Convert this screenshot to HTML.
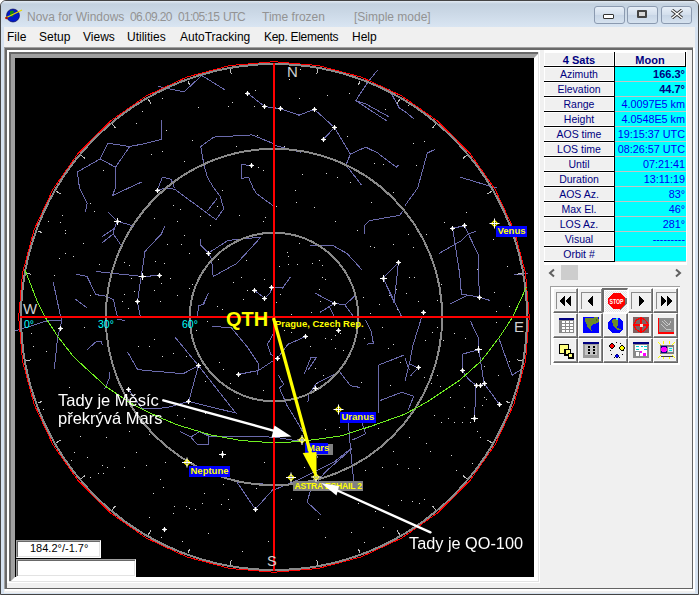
<!DOCTYPE html>
<html><head><meta charset="utf-8">
<style>
*{margin:0;padding:0;box-sizing:border-box}
html,body{width:699px;height:595px;overflow:hidden;background:#fff;font-family:"Liberation Sans",sans-serif}
.a{position:absolute}
.t{position:absolute;white-space:nowrap;line-height:1}
#win{left:0;top:0;width:699px;height:595px;background:#d6e2f0;border:1px solid #444;border-radius:6px 6px 0 0}
#title{left:1px;top:1px;width:697px;height:26px;background:linear-gradient(#e2eaf3 0px,#c3d1df 3px,#cddae8 14px,#d9e5f2 26px);border-radius:5px 5px 0 0}
.ttxt{color:#939393;font-size:12px;top:11px}
.tb{top:6px;width:31px;height:18px;border:1px solid #8b9ab0;border-radius:3px;background:linear-gradient(#e6eef7,#d2deec 50%,#c7d5e6 51%,#d6e2ef)}
#menu{left:4px;top:27px;width:691px;height:20px;background:#f0f0f0}
.mtxt{color:#000;font-size:12px;top:31px}
#client{left:4px;top:47px;width:691px;height:546px;background:#f0f0f0}
.gc{position:absolute;background:#f0f0f0;border:1px solid #fff}
.bl{position:absolute;background:#000}
.lab{position:absolute;white-space:nowrap;line-height:1;font-size:10.5px;color:#000080;text-align:center;width:70px;left:544px}
.val{position:absolute;white-space:nowrap;line-height:1;font-size:10.5px;color:#0000f0;text-align:right;width:80px;left:605px}
.btn{position:absolute;width:25px;height:25px;border-right:1px solid #666;border-bottom:1px solid #666;border-top:1px solid #fff;border-left:1px solid #fff;background:#f0f0f0;box-shadow:inset -1px -1px 0 #8a8a8a,inset -2px -2px 0 #f8f8f8}
</style></head><body>
<div id="win" class="a"></div>
<div id="title" class="a"></div>
<svg class="a" style="left:5px;top:8px" width="18" height="15" viewBox="0 0 18 15">
<circle cx="8" cy="7.5" r="6.5" fill="#0018c8" stroke="#000040" stroke-width="0.6"/>
<path d="M5 3 L8 2.5 L9 4 L7.5 6 L8.5 8 L6.5 9 L5 6 Z" fill="#108a10"/>
<path d="M0.5 10 L17 2" stroke="#e8d800" stroke-width="1.3"/>
<circle cx="1.5" cy="10" r="1.3" fill="#b01000"/>
</svg>
<div class="t ttxt" style="left:27px">Nova for Windows</div>
<div class="t ttxt" style="left:130px;letter-spacing:-0.6px">06.09.20</div>
<div class="t ttxt" style="left:178px;letter-spacing:-0.7px">01:05:15</div><div class="t ttxt" style="left:223px;letter-spacing:-1px">UTC</div>
<div class="t ttxt" style="left:262px">Time frozen</div>
<div class="t ttxt" style="left:354px">[Simple mode]</div>
<div class="a tb" style="left:594px"></div>
<div class="a tb" style="left:627px"></div>
<div class="a tb" style="left:661px"></div>
<div class="a" style="left:603px;top:14px;width:11px;height:5px;border:1px solid #333;background:#fff;border-radius:1px"></div>
<div class="a" style="left:637px;top:10px;width:10px;height:8px;border:2px solid #444;background:#d8d8d8;border-radius:1px"></div>
<svg class="a" style="left:670px;top:9px" width="14" height="10" viewBox="0 0 14 10"><path d="M2 1 L12 9 M12 1 L2 9" stroke="#333" stroke-width="3.2"/><path d="M2 1 L12 9 M12 1 L2 9" stroke="#fff" stroke-width="1.4"/></svg>
<div id="menu" class="a"></div>
<div class="t mtxt" style="left:7px">File</div>
<div class="t mtxt" style="left:39px">Setup</div>
<div class="t mtxt" style="left:83px">Views</div>
<div class="t mtxt" style="left:127px">Utilities</div>
<div class="t mtxt" style="left:180px">AutoTracking</div>
<div class="t mtxt" style="left:264px;letter-spacing:-0.3px">Kep. Elements</div>
<div class="t mtxt" style="left:352px">Help</div>
<div id="client" class="a"></div>
<div class="a" style="left:4px;top:47px;width:689px;height:542px;border-top:1px solid #a0a0a0;border-left:1px solid #a0a0a0"></div>
<div class="a" style="left:5px;top:48px;width:688px;height:541px;border-top:2px solid #696969;border-left:2px solid #696969;border-right:1px solid #646464;border-bottom:1px solid #646464"></div>
<div class="a" style="left:693px;top:48px;width:2px;height:543px;background:#fff"></div>
<div class="a" style="left:5px;top:589px;width:690px;height:2px;background:#fff"></div>
<div class="a" style="left:7px;top:50px;width:533px;height:533px;border-top:2px solid #fff;border-left:2px solid #fff;border-right:1px solid #fff;border-bottom:1px solid #fff"></div>
<div class="a" style="left:9px;top:52px;width:530px;height:530px;border-right:1px solid #e3e3e3;border-bottom:1px solid #e3e3e3"></div>
<div class="a" style="left:9px;top:52px;width:529px;height:529px;border-top:2px solid #696969;border-left:2px solid #696969"></div>
<div class="a" style="left:11px;top:54px;width:527px;height:527px;border:4px solid #fff;border-top-color:#a0a0a0;border-left-color:#a0a0a0;background:#000"></div>

<div class="a" style="left:544px;top:50px;width:143px;height:215px;background:#fff"></div>
<div class="gc" style="left:544px;top:52px;width:70px;height:14px"></div>
<div class="bl" style="left:544px;top:66px;width:71px;height:1px"></div>
<div class="bl" style="left:614px;top:52px;width:1px;height:15px"></div>
<div class="gc" style="left:615px;top:52px;width:70px;height:14px"></div>
<div class="bl" style="left:615px;top:66px;width:71px;height:1px"></div>
<div class="bl" style="left:685px;top:52px;width:1px;height:15px"></div>
<div class="lab" style="top:55px;font-weight:bold;font-size:11px">4 Sats</div>
<div class="lab" style="top:55px;left:615px;font-weight:bold;font-size:11px">Moon</div>
<div class="gc" style="left:544px;top:67px;width:70px;height:14px"></div>
<div class="bl" style="left:544px;top:81px;width:71px;height:1px"></div>
<div class="bl" style="left:614px;top:67px;width:1px;height:15px"></div>
<div class="a" style="left:615px;top:67px;width:71px;height:14px;background:#00ffff"></div>
<div class="a" style="left:615px;top:81px;width:71px;height:1px;background:#c4c4c4"></div>
<div class="lab" style="top:69px">Azimuth</div>
<div class="val" style="top:69px;font-weight:bold;color:#000080;font-size:11px">166.3°</div>
<div class="gc" style="left:544px;top:82px;width:70px;height:14px"></div>
<div class="bl" style="left:544px;top:96px;width:71px;height:1px"></div>
<div class="bl" style="left:614px;top:82px;width:1px;height:15px"></div>
<div class="a" style="left:615px;top:82px;width:71px;height:14px;background:#00ffff"></div>
<div class="a" style="left:615px;top:96px;width:71px;height:1px;background:#c4c4c4"></div>
<div class="lab" style="top:84px">Elevation</div>
<div class="val" style="top:84px;font-weight:bold;color:#000080;font-size:11px">44.7°</div>
<div class="gc" style="left:544px;top:97px;width:70px;height:14px"></div>
<div class="bl" style="left:544px;top:111px;width:71px;height:1px"></div>
<div class="bl" style="left:614px;top:97px;width:1px;height:15px"></div>
<div class="a" style="left:615px;top:97px;width:71px;height:14px;background:#00ffff"></div>
<div class="a" style="left:615px;top:111px;width:71px;height:1px;background:#c4c4c4"></div>
<div class="lab" style="top:99px">Range</div>
<div class="val" style="top:99px;font-size:10.8px">4.0097E5 km</div>
<div class="gc" style="left:544px;top:112px;width:70px;height:14px"></div>
<div class="bl" style="left:544px;top:126px;width:71px;height:1px"></div>
<div class="bl" style="left:614px;top:112px;width:1px;height:15px"></div>
<div class="a" style="left:615px;top:112px;width:71px;height:14px;background:#00ffff"></div>
<div class="a" style="left:615px;top:126px;width:71px;height:1px;background:#c4c4c4"></div>
<div class="lab" style="top:114px">Height</div>
<div class="val" style="top:114px;font-size:10.8px">4.0548E5 km</div>
<div class="gc" style="left:544px;top:127px;width:70px;height:14px"></div>
<div class="bl" style="left:544px;top:141px;width:71px;height:1px"></div>
<div class="bl" style="left:614px;top:127px;width:1px;height:15px"></div>
<div class="a" style="left:615px;top:127px;width:71px;height:14px;background:#00ffff"></div>
<div class="a" style="left:615px;top:141px;width:71px;height:1px;background:#c4c4c4"></div>
<div class="lab" style="top:129px">AOS time</div>
<div class="val" style="top:129px;font-size:10.8px">19:15:37 UTC</div>
<div class="gc" style="left:544px;top:142px;width:70px;height:14px"></div>
<div class="bl" style="left:544px;top:156px;width:71px;height:1px"></div>
<div class="bl" style="left:614px;top:142px;width:1px;height:15px"></div>
<div class="a" style="left:615px;top:142px;width:71px;height:14px;background:#00ffff"></div>
<div class="a" style="left:615px;top:156px;width:71px;height:1px;background:#c4c4c4"></div>
<div class="lab" style="top:144px">LOS time</div>
<div class="val" style="top:144px;font-size:10.8px">08:26:57 UTC</div>
<div class="gc" style="left:544px;top:157px;width:70px;height:14px"></div>
<div class="bl" style="left:544px;top:171px;width:71px;height:1px"></div>
<div class="bl" style="left:614px;top:157px;width:1px;height:15px"></div>
<div class="a" style="left:615px;top:157px;width:71px;height:14px;background:#00ffff"></div>
<div class="a" style="left:615px;top:171px;width:71px;height:1px;background:#c4c4c4"></div>
<div class="lab" style="top:159px">Until</div>
<div class="val" style="top:159px;font-size:10.8px">07:21:41</div>
<div class="gc" style="left:544px;top:172px;width:70px;height:14px"></div>
<div class="bl" style="left:544px;top:186px;width:71px;height:1px"></div>
<div class="bl" style="left:614px;top:172px;width:1px;height:15px"></div>
<div class="a" style="left:615px;top:172px;width:71px;height:14px;background:#00ffff"></div>
<div class="a" style="left:615px;top:186px;width:71px;height:1px;background:#c4c4c4"></div>
<div class="lab" style="top:174px">Duration</div>
<div class="val" style="top:174px;font-size:10.8px">13:11:19</div>
<div class="gc" style="left:544px;top:187px;width:70px;height:14px"></div>
<div class="bl" style="left:544px;top:201px;width:71px;height:1px"></div>
<div class="bl" style="left:614px;top:187px;width:1px;height:15px"></div>
<div class="a" style="left:615px;top:187px;width:71px;height:14px;background:#00ffff"></div>
<div class="a" style="left:615px;top:201px;width:71px;height:1px;background:#c4c4c4"></div>
<div class="lab" style="top:189px">AOS Az.</div>
<div class="val" style="top:189px;font-size:10.8px">83°</div>
<div class="gc" style="left:544px;top:202px;width:70px;height:14px"></div>
<div class="bl" style="left:544px;top:216px;width:71px;height:1px"></div>
<div class="bl" style="left:614px;top:202px;width:1px;height:15px"></div>
<div class="a" style="left:615px;top:202px;width:71px;height:14px;background:#00ffff"></div>
<div class="a" style="left:615px;top:216px;width:71px;height:1px;background:#c4c4c4"></div>
<div class="lab" style="top:204px">Max El.</div>
<div class="val" style="top:204px;font-size:10.8px">46°</div>
<div class="gc" style="left:544px;top:217px;width:70px;height:14px"></div>
<div class="bl" style="left:544px;top:231px;width:71px;height:1px"></div>
<div class="bl" style="left:614px;top:217px;width:1px;height:15px"></div>
<div class="a" style="left:615px;top:217px;width:71px;height:14px;background:#00ffff"></div>
<div class="a" style="left:615px;top:231px;width:71px;height:1px;background:#c4c4c4"></div>
<div class="lab" style="top:219px">LOS Az.</div>
<div class="val" style="top:219px;font-size:10.8px">281°</div>
<div class="gc" style="left:544px;top:232px;width:70px;height:14px"></div>
<div class="bl" style="left:544px;top:246px;width:71px;height:1px"></div>
<div class="bl" style="left:614px;top:232px;width:1px;height:15px"></div>
<div class="a" style="left:615px;top:232px;width:71px;height:14px;background:#00ffff"></div>
<div class="a" style="left:615px;top:246px;width:71px;height:1px;background:#c4c4c4"></div>
<div class="lab" style="top:234px">Visual</div>
<div class="val" style="top:234px;font-size:10.8px">---------</div>
<div class="gc" style="left:544px;top:247px;width:70px;height:14px"></div>
<div class="bl" style="left:544px;top:261px;width:71px;height:1px"></div>
<div class="bl" style="left:614px;top:247px;width:1px;height:15px"></div>
<div class="a" style="left:615px;top:247px;width:71px;height:14px;background:#00ffff"></div>
<div class="a" style="left:615px;top:261px;width:71px;height:1px;background:#c4c4c4"></div>
<div class="lab" style="top:249px">Orbit #</div>
<div class="val" style="top:249px;font-size:10.8px"></div>
<svg class="a" style="left:548px;top:268px" width="8" height="10"><path d="M6 1.5 L2 5 L6 8.5" fill="none" stroke="#606060" stroke-width="2"/></svg>
<div class="a" style="left:561px;top:265px;width:17px;height:15px;background:#cdcdcd"></div>
<svg class="a" style="left:674px;top:268px" width="8" height="10"><path d="M2 1.5 L6 5 L2 8.5" fill="none" stroke="#606060" stroke-width="2"/></svg>
<div class="a" style="left:550px;top:286px;width:130px;height:79px;border-top:1px solid #a0a0a0;border-left:1px solid #a0a0a0;background:#fff"></div>
<div class="btn" style="left:553px;top:288px"></div>
<div class="btn" style="left:578px;top:288px"></div>
<div class="btn" style="left:603px;top:288px"></div>
<div class="btn" style="left:628px;top:288px"></div>
<div class="btn" style="left:653px;top:288px"></div>
<div class="btn" style="left:553px;top:313px"></div>
<div class="btn" style="left:578px;top:313px"></div>
<div class="btn" style="left:603px;top:313px"></div>
<div class="btn" style="left:628px;top:313px"></div>
<div class="btn" style="left:653px;top:313px"></div>
<div class="btn" style="left:553px;top:338px"></div>
<div class="btn" style="left:578px;top:338px"></div>
<div class="btn" style="left:603px;top:338px"></div>
<div class="btn" style="left:628px;top:338px"></div>
<div class="btn" style="left:653px;top:338px"></div>
<div class="a" style="left:556px;top:292px;width:20px;height:17px;border-top:1px solid #8c8c8c;border-left:1px solid #8c8c8c"></div>
<div class="a" style="left:581px;top:292px;width:20px;height:17px;border-top:1px solid #8c8c8c;border-left:1px solid #8c8c8c"></div>
<div class="a" style="left:631px;top:292px;width:20px;height:17px;border-top:1px solid #8c8c8c;border-left:1px solid #8c8c8c"></div>
<div class="a" style="left:656px;top:292px;width:20px;height:17px;border-top:1px solid #8c8c8c;border-left:1px solid #8c8c8c"></div>
<svg class="a" style="left:559px;top:296px" width="12" height="10" viewBox="0 0 12 10" shape-rendering="crispEdges"><path d="M0 5 L6 0 L6 10 Z M6 5 L12 0 L12 10 Z" fill="#000"/></svg>
<svg class="a" style="left:587px;top:296px" width="7" height="10" viewBox="0 0 7 10" shape-rendering="crispEdges"><path d="M0 5 L6 0 L6 10 Z" fill="#000"/></svg>
<svg class="a" style="left:638px;top:296px" width="7" height="10" viewBox="0 0 7 10" shape-rendering="crispEdges"><path d="M7 5 L1 0 L1 10 Z" fill="#000"/></svg>
<svg class="a" style="left:661px;top:296px" width="12" height="10" viewBox="0 0 12 10" shape-rendering="crispEdges"><path d="M6 5 L0 0 L0 10 Z M12 5 L6 0 L6 10 Z" fill="#000"/></svg>
<div class="a" style="left:602px;top:288px;width:26px;height:25px;background:repeating-conic-gradient(#fbfbfb 0% 25%, #e4e4e4 0% 50%) 0 0/2px 2px;border-top:2px solid #6d6d6d;border-left:2px solid #6d6d6d;border-right:1px solid #fff;border-bottom:1px solid #fff"></div>
<div class="a" style="left:604px;top:290px;width:23px;height:1px;background:#fff"></div><div class="a" style="left:604px;top:290px;width:1px;height:21px;background:#fff"></div>
<svg class="a" style="left:607px;top:292px" width="20" height="19" viewBox="0 0 20 19" shape-rendering="crispEdges"><path d="M13 18 L19 12 L19 6" fill="none" stroke="#707070" stroke-width="1.2"/><path d="M6 1 L13 1 L18 6 L18 12 L13 17 L6 17 L1 12 L1 6 Z" fill="#ff0000"/><text x="2.5" y="12" font-family="Liberation Sans" font-weight="bold" font-size="6.6" fill="#fff" textLength="14" lengthAdjust="spacingAndGlyphs">STOP</text></svg>
<svg class="a" style="left:558px;top:317px" width="17" height="17" viewBox="0 0 17 17" shape-rendering="crispEdges"><rect x="1" y="1" width="15" height="15" fill="#8a8a8a"/><rect x="1" y="1" width="15" height="1.5" fill="#000080"/><g fill="#fff"><rect x="4" y="4" width="3" height="2"/><rect x="8" y="4" width="3" height="2"/><rect x="12" y="4" width="3" height="2"/><rect x="4" y="7" width="3" height="2"/><rect x="8" y="7" width="3" height="2"/><rect x="12" y="7" width="3" height="2"/><rect x="4" y="10" width="3" height="2"/><rect x="8" y="10" width="3" height="2"/><rect x="12" y="10" width="3" height="2"/><rect x="4" y="13" width="3" height="2"/><rect x="8" y="13" width="3" height="2"/><rect x="12" y="13" width="3" height="2"/></g></svg>
<svg class="a" style="left:583px;top:317px" width="17" height="17" viewBox="0 0 17 17" shape-rendering="crispEdges"><rect x="0" y="0" width="16" height="16" fill="#0000ff"/><path d="M1.9 1.5 L15 0 L16 4.5 L12.8 6.7 L9.3 7.9 L7.6 10.2 L8.8 14.2 L11 16 L4.8 10.2 L1.9 3.3 Z" fill="#6b8a2a"/><path d="M4 3 L8 2.5 L7 5 Z" fill="#8a6a3a"/><path d="M12 3 L14 2 L13.5 4 Z" fill="#4a6a1a"/></svg>
<svg class="a" style="left:607px;top:317px" width="18" height="18" viewBox="0 0 18 18" shape-rendering="crispEdges"><path d="M5 1 L12 1 L16 5 L16 12 L12 16 L5 16 L1 12 L1 5 Z" fill="#0000ff"/><path d="M6.5 1.6 L10.5 3.3 L11.6 7.9 L9.4 10.2 L13.9 12.5 L10.5 13 L6.5 9 L4.8 4.4 Z" fill="#6b8a2a"/><rect x="8.8" y="1" width="2.2" height="2" fill="#40e0ff"/></svg>
<svg class="a" style="left:633px;top:317px" width="17" height="17" viewBox="0 0 17 17" shape-rendering="crispEdges"><rect x="0" y="0" width="16" height="16" fill="#806060"/><circle cx="8" cy="8" r="6.5" fill="none" stroke="#ff0000" stroke-width="1.4"/><path d="M0 8 H16 M8 0 V16" stroke="#ff0000" stroke-width="1.2"/><rect x="6.5" y="6.5" width="3" height="3" fill="#ffd8d8"/></svg>
<svg class="a" style="left:658px;top:318px" width="16" height="16" viewBox="0 0 16 16" shape-rendering="crispEdges"><rect x="0" y="0" width="16" height="15" fill="#8c8c8c"/><path d="M0 0 V15 H16" fill="none" stroke="#ff0000" stroke-width="2"/><path d="M4 3 L9 8 L12 5 M6 2 L11 7 L13 3 M3 6 L8 11 L13 11" fill="none" stroke="#c8c8c8" stroke-width="1"/></svg>
<svg class="a" style="left:558px;top:343px" width="17" height="17" viewBox="0 0 17 17" shape-rendering="crispEdges"><rect x="1.5" y="1.5" width="9" height="9" fill="#ffff80" stroke="#000" stroke-width="1.5"/><rect x="7" y="6.5" width="5.5" height="5.5" fill="#ffff80" stroke="#000" stroke-width="1.5"/><rect x="10.5" y="10.5" width="4.5" height="4.5" fill="#ffff80" stroke="#000" stroke-width="1.5"/></svg>
<svg class="a" style="left:583px;top:342px" width="17" height="17" viewBox="0 0 17 17" shape-rendering="crispEdges"><rect x="0" y="0" width="16" height="16" fill="#9a9a9a"/><rect x="0" y="0" width="16" height="2" fill="#000080"/><rect x="2" y="3" width="12" height="10" fill="#c4c4c4"/><g fill="#000"><rect x="5" y="4" width="2" height="1.5"/><rect x="10" y="4" width="2" height="1.5"/><rect x="5" y="7" width="2" height="1.5"/><rect x="10" y="7" width="2" height="1.5"/><rect x="5" y="10" width="2" height="1.5"/><rect x="10" y="10" width="2" height="1.5"/></g></svg>
<svg class="a" style="left:607px;top:341px" width="19" height="19" viewBox="0 0 19 19" shape-rendering="crispEdges"><g fill="#000"><rect x="9" y="1" width="1" height="1"/><rect x="13" y="2" width="1" height="1"/><rect x="3" y="9" width="1" height="1"/><rect x="4" y="13" width="1" height="1"/><rect x="7" y="16" width="1" height="1"/><rect x="12" y="16" width="1" height="1"/><rect x="15" y="13" width="1" height="1"/><rect x="16" y="9" width="1" height="1"/></g><path d="M5 2 L8 5 L5 8 L2 5 Z" fill="#ff0000" stroke="#000" stroke-width="1"/><path d="M15 4 L18 7 L15 10 L12 7 Z" fill="#ffff00" stroke="#000" stroke-width="1"/><path d="M10 13 L12 15 L10 17 L8 15 Z" fill="#0000ff" stroke="#000080" stroke-width="1"/></svg>
<svg class="a" style="left:633px;top:342px" width="17" height="17" viewBox="0 0 17 17" shape-rendering="crispEdges"><rect x="0" y="0" width="16" height="16" fill="#8a8a8a"/><rect x="0" y="0" width="16" height="2" fill="#000080"/><rect x="2" y="3" width="12" height="11" fill="#fff"/><g fill="#00d0d0"><rect x="3" y="4" width="3" height="1"/><rect x="8" y="4" width="2" height="1"/><rect x="11" y="4" width="3" height="1"/><rect x="3" y="7" width="3" height="1"/><rect x="11" y="7" width="3" height="1"/></g><rect x="2" y="9" width="4" height="5" fill="#fff" stroke="#8a8a8a"/><rect x="10" y="11" width="3" height="3" fill="#ff00ff"/><rect x="7" y="9" width="2" height="2" fill="#ff00ff"/></svg>
<svg class="a" style="left:657px;top:340px" width="19" height="20" viewBox="0 0 19 20" shape-rendering="crispEdges"><g stroke="#ffff00" stroke-width="1.2"><path d="M1 2 L4 5 M6 1 L7 4 M13 1 L12 4 M18 2 L15 5 M1 18 L4 15 M6 19 L7 16 M13 19 L12 16 M18 18 L15 15"/></g><rect x="3" y="5" width="14" height="9" fill="#808080"/><rect x="4" y="6" width="6" height="7" fill="#000080"/><circle cx="7" cy="9.5" r="2.8" fill="#ff00ff"/><rect x="11" y="7" width="5" height="5" fill="#e8e8e8"/><rect x="12" y="8" width="3" height="1" fill="#00e0e0"/><rect x="12" y="10" width="3" height="1" fill="#00e0e0"/><rect x="4" y="16" width="12" height="1" fill="#404040"/></svg>
<svg class="a" style="left:0;top:0" width="699" height="595" viewBox="0 0 699 595">
<defs><clipPath id="cp"><rect x="15" y="58" width="519" height="519"/></clipPath></defs><g clip-path="url(#cp)">
<polyline points="107.9,143.2 129.7,146.5 145.0,143.6" fill="none" stroke="#6a6aac" stroke-width="1" shape-rendering="crispEdges"/>
<polyline points="107.9,143.2 100.2,158.9 115.5,167.2 129.7,146.5" fill="none" stroke="#6a6aac" stroke-width="1" shape-rendering="crispEdges"/>
<polyline points="100.2,158.9 77.3,172.0 79.5,188.0 87.1,203.3 85.4,211.6" fill="none" stroke="#6a6aac" stroke-width="1" shape-rendering="crispEdges"/>
<polyline points="115.5,167.2 115.5,188.0 112.2,195.6 128.6,188.0 141.7,182.0" fill="none" stroke="#6a6aac" stroke-width="1" shape-rendering="crispEdges"/>
<polyline points="158.1,86.4 183.9,91.9 201.8,75.5 224.7,89.7" fill="none" stroke="#6a6aac" stroke-width="1" shape-rendering="crispEdges"/>
<polyline points="247.3,93.0 264.7,106.5 280.5,108.7 299.0,115.2 314.3,109.3 334.4,127.5 350.4,154.1 365.7,147.1 377.7,153.0 396.3,167.2 398.4,165.1" fill="none" stroke="#6a6aac" stroke-width="1" shape-rendering="crispEdges"/>
<polyline points="161.4,120.3 161.4,139.3 145.0,143.6" fill="none" stroke="#6a6aac" stroke-width="1" shape-rendering="crispEdges"/>
<polyline points="275.0,144.3 252.1,134.9 213.8,137.1 200.7,146.5 204.0,165.0 207.3,177.1 213.8,188.0 220.4,196.7 223.7,208.8 216.0,219.7 174.5,189.1 164.7,188.4 157.7,190.2" fill="none" stroke="#6a6aac" stroke-width="1" shape-rendering="crispEdges"/>
<polyline points="207.3,210.9 217.1,198.5" fill="none" stroke="#6a6aac" stroke-width="1" shape-rendering="crispEdges"/>
<polyline points="241.1,164.6 251.0,165.5" fill="none" stroke="#6a6aac" stroke-width="1" shape-rendering="crispEdges"/>
<polyline points="241.1,164.6 241.1,178.2 248.8,177.7 253.1,188.0 256.4,193.5 272.8,205.5 275.0,206.5" fill="none" stroke="#6a6aac" stroke-width="1" shape-rendering="crispEdges"/>
<polyline points="158.1,188.0 162.5,177.1 171.2,179.3 174.5,188.0" fill="none" stroke="#6a6aac" stroke-width="1" shape-rendering="crispEdges"/>
<polyline points="334.4,127.5 323.5,139.3" fill="none" stroke="#6a6aac" stroke-width="1" shape-rendering="crispEdges"/>
<polyline points="350.4,154.1 346.0,165.1 361.3,184.7" fill="none" stroke="#6a6aac" stroke-width="1" shape-rendering="crispEdges"/>
<polyline points="377.7,70.0 367.9,82.0 355.8,100.6 365.7,103.9 388.6,116.6" fill="none" stroke="#6a6aac" stroke-width="1" shape-rendering="crispEdges"/>
<polyline points="355.8,100.6 387.5,121.4" fill="none" stroke="#6a6aac" stroke-width="1" shape-rendering="crispEdges"/>
<polyline points="388.6,88.6 399.5,108.3 405.0,111.5 413.7,118.7" fill="none" stroke="#6a6aac" stroke-width="1" shape-rendering="crispEdges"/>
<polyline points="275.0,145.4 301.2,152.4" fill="none" stroke="#6a6aac" stroke-width="1" shape-rendering="crispEdges"/>
<polyline points="435.2,149.3 427.3,153.0 417.7,188.0 405.0,205.5" fill="none" stroke="#6a6aac" stroke-width="1" shape-rendering="crispEdges"/>
<polyline points="460.1,177.1 492.4,186.9 496.8,187.3" fill="none" stroke="#6a6aac" stroke-width="1" shape-rendering="crispEdges"/>
<polyline points="107.9,212.0 117.3,221.2 134.1,226.2" fill="none" stroke="#6a6aac" stroke-width="1" shape-rendering="crispEdges"/>
<polyline points="117.3,221.2 114.4,228.4 102.4,236.5" fill="none" stroke="#6a6aac" stroke-width="1" shape-rendering="crispEdges"/>
<polyline points="114.4,228.4 113.3,233.9 102.4,242.6" fill="none" stroke="#6a6aac" stroke-width="1" shape-rendering="crispEdges"/>
<polyline points="113.3,233.9 121.0,245.2" fill="none" stroke="#6a6aac" stroke-width="1" shape-rendering="crispEdges"/>
<polyline points="95.8,271.5 142.8,276.5 159.2,275.4" fill="none" stroke="#6a6aac" stroke-width="1" shape-rendering="crispEdges"/>
<polyline points="76.2,274.3 87.1,276.5 95.8,294.6 105.7,296.1 113.3,299.4 117.7,318.0" fill="none" stroke="#6a6aac" stroke-width="1" shape-rendering="crispEdges"/>
<polyline points="53.2,282.0 60.9,318.0 62.0,320.2 57.6,337.7 54.3,369.3" fill="none" stroke="#6a6aac" stroke-width="1" shape-rendering="crispEdges"/>
<polyline points="15.0,331.0 47.8,320.6 62.0,320.2" fill="none" stroke="#6a6aac" stroke-width="1" shape-rendering="crispEdges"/>
<polyline points="75.1,299.0 86.7,307.7" fill="none" stroke="#6a6aac" stroke-width="1" shape-rendering="crispEdges"/>
<polyline points="145.0,251.4 137.4,301.6 140.6,318.0" fill="none" stroke="#6a6aac" stroke-width="1" shape-rendering="crispEdges"/>
<polyline points="164.7,226.2 161.4,233.9 145.0,251.4" fill="none" stroke="#6a6aac" stroke-width="1" shape-rendering="crispEdges"/>
<polyline points="145.0,276.5 159.2,275.4" fill="none" stroke="#6a6aac" stroke-width="1" shape-rendering="crispEdges"/>
<polyline points="200.1,239.3 200.7,245.2 208.4,253.1 211.6,259.0 213.2,276.5 236.8,263.4 260.8,237.2 228.0,240.4 208.4,253.1" fill="none" stroke="#6a6aac" stroke-width="1" shape-rendering="crispEdges"/>
<polyline points="254.2,290.3 264.7,298.3 270.6,292.4 271.7,287.4 275.0,287.4 282.6,288.1 290.3,277.1" fill="none" stroke="#6a6aac" stroke-width="1" shape-rendering="crispEdges"/>
<polyline points="197.4,318.0 198.5,306.0 204.0,303.8 208.4,292.9 202.9,304.9" fill="none" stroke="#6a6aac" stroke-width="1" shape-rendering="crispEdges"/>
<polyline points="405.0,208.8 399.5,215.3 369.0,220.8 365.0,225.1 364.1,233.9" fill="none" stroke="#6a6aac" stroke-width="1" shape-rendering="crispEdges"/>
<polyline points="310.0,245.2 332.2,245.2 347.1,253.5 362.0,269.9" fill="none" stroke="#6a6aac" stroke-width="1" shape-rendering="crispEdges"/>
<polyline points="315.4,293.3 334.4,303.4 344.9,304.9 355.8,295.1" fill="none" stroke="#6a6aac" stroke-width="1" shape-rendering="crispEdges"/>
<polyline points="319.8,312.5 334.4,303.4" fill="none" stroke="#6a6aac" stroke-width="1" shape-rendering="crispEdges"/>
<polyline points="329.6,307.1 335.1,318.0" fill="none" stroke="#6a6aac" stroke-width="1" shape-rendering="crispEdges"/>
<polyline points="344.9,304.9 353.7,316.9" fill="none" stroke="#6a6aac" stroke-width="1" shape-rendering="crispEdges"/>
<polyline points="398.4,262.7 383.2,278.0 394.1,302.7 398.4,262.7" fill="none" stroke="#6a6aac" stroke-width="1" shape-rendering="crispEdges"/>
<polyline points="383.2,278.0 401.7,316.9" fill="none" stroke="#6a6aac" stroke-width="1" shape-rendering="crispEdges"/>
<polyline points="452.6,228.4 464.4,225.6 478.2,254.6 479.3,297.2" fill="none" stroke="#6a6aac" stroke-width="1" shape-rendering="crispEdges"/>
<polyline points="452.6,228.4 459.6,273.2 461.4,294.0 479.3,297.2 490.2,300.5" fill="none" stroke="#6a6aac" stroke-width="1" shape-rendering="crispEdges"/>
<polyline points="438.9,253.5 461.8,240.4 468.4,233.9 476.0,231.3" fill="none" stroke="#6a6aac" stroke-width="1" shape-rendering="crispEdges"/>
<polyline points="449.8,304.2 467.9,295.1" fill="none" stroke="#6a6aac" stroke-width="1" shape-rendering="crispEdges"/>
<polyline points="514.2,275.0 528.4,273.6" fill="none" stroke="#6a6aac" stroke-width="1" shape-rendering="crispEdges"/>
<polyline points="87.1,349.7 95.8,342.0 101.3,341.6 102.4,344.7" fill="none" stroke="#6a6aac" stroke-width="1" shape-rendering="crispEdges"/>
<polyline points="109.0,372.2 110.0,377.0 104.6,389.0" fill="none" stroke="#6a6aac" stroke-width="1" shape-rendering="crispEdges"/>
<polyline points="127.5,351.9 137.4,369.3 145.0,370.4" fill="none" stroke="#6a6aac" stroke-width="1" shape-rendering="crispEdges"/>
<polyline points="116.6,319.1 125.3,320.6" fill="none" stroke="#6a6aac" stroke-width="1" shape-rendering="crispEdges"/>
<polyline points="211.6,326.3 231.3,327.8 247.7,347.5 258.6,363.9 257.5,375.2" fill="none" stroke="#6a6aac" stroke-width="1" shape-rendering="crispEdges"/>
<polyline points="238.5,374.4 258.6,370.4 275.0,359.5" fill="none" stroke="#6a6aac" stroke-width="1" shape-rendering="crispEdges"/>
<polyline points="275.0,331.1 267.4,344.2 270.6,354.0 275.0,357.3" fill="none" stroke="#6a6aac" stroke-width="1" shape-rendering="crispEdges"/>
<polyline points="174.5,336.6 198.5,365.6 235.7,413.0 188.7,401.5 198.5,365.6" fill="none" stroke="#6a6aac" stroke-width="1" shape-rendering="crispEdges"/>
<polyline points="145.0,370.4 183.2,373.7 198.5,365.6" fill="none" stroke="#6a6aac" stroke-width="1" shape-rendering="crispEdges"/>
<polyline points="188.7,401.5 169.0,407.1 160.0,408.3 142.4,408.8 128.2,389.0" fill="none" stroke="#6a6aac" stroke-width="1" shape-rendering="crispEdges"/>
<polyline points="180.0,431.6 190.9,437.1 197.4,444.7 208.4,444.7 208.4,436.0 199.6,431.6 190.9,437.1" fill="none" stroke="#6a6aac" stroke-width="1" shape-rendering="crispEdges"/>
<polyline points="208.4,436.0 275.0,437.1 298.5,441.2" fill="none" stroke="#6a6aac" stroke-width="1" shape-rendering="crispEdges"/>
<polyline points="277.2,358.4 288.1,344.2 305.6,336.6" fill="none" stroke="#6a6aac" stroke-width="1" shape-rendering="crispEdges"/>
<polyline points="304.5,373.7 311.0,357.3 316.5,357.3 307.8,370.4" fill="none" stroke="#6a6aac" stroke-width="1" shape-rendering="crispEdges"/>
<polyline points="339.5,371.5 316.5,383.5 308.9,394.5 307.8,402.1" fill="none" stroke="#6a6aac" stroke-width="1" shape-rendering="crispEdges"/>
<polyline points="339.5,371.5 350.4,385.7 360.2,387.5" fill="none" stroke="#6a6aac" stroke-width="1" shape-rendering="crispEdges"/>
<polyline points="403.9,355.1 378.8,365.0 378.8,413.0" fill="none" stroke="#6a6aac" stroke-width="1" shape-rendering="crispEdges"/>
<polyline points="379.9,400.6 401.7,392.3 405.0,393.4" fill="none" stroke="#6a6aac" stroke-width="1" shape-rendering="crispEdges"/>
<polyline points="278.3,374.8 283.7,384.6 279.4,387.9 287.0,405.4 299.0,425.0 310.0,444.7 318.0,458.0" fill="none" stroke="#6a6aac" stroke-width="1" shape-rendering="crispEdges"/>
<polyline points="365.7,320.2 371.1,331.1 373.3,343.1 366.8,344.2" fill="none" stroke="#6a6aac" stroke-width="1" shape-rendering="crispEdges"/>
<polyline points="348.2,420.7 350.4,448.0 353.7,480.8" fill="none" stroke="#6a6aac" stroke-width="1" shape-rendering="crispEdges"/>
<polyline points="361.3,420.7 365.7,433.8 351.5,440.4" fill="none" stroke="#6a6aac" stroke-width="1" shape-rendering="crispEdges"/>
<polyline points="421.4,318.0 412.6,346.4 409.4,363.9 405.0,381.4" fill="none" stroke="#6a6aac" stroke-width="1" shape-rendering="crispEdges"/>
<polyline points="409.4,363.9 418.1,367.8 410.5,375.9" fill="none" stroke="#6a6aac" stroke-width="1" shape-rendering="crispEdges"/>
<polyline points="405.0,358.4 409.4,370.4" fill="none" stroke="#6a6aac" stroke-width="1" shape-rendering="crispEdges"/>
<polyline points="405.0,393.4 413.7,396.2 408.3,409.8" fill="none" stroke="#6a6aac" stroke-width="1" shape-rendering="crispEdges"/>
<polyline points="470.5,321.3 478.2,337.7 478.8,349.7 462.9,354.0 462.2,370.4 468.4,379.2 476.0,385.3 480.4,385.3 484.1,383.5 478.8,349.7" fill="none" stroke="#6a6aac" stroke-width="1" shape-rendering="crispEdges"/>
<polyline points="484.1,383.5 499.4,404.3" fill="none" stroke="#6a6aac" stroke-width="1" shape-rendering="crispEdges"/>
<polyline points="476.0,385.3 474.5,418.5" fill="none" stroke="#6a6aac" stroke-width="1" shape-rendering="crispEdges"/>
<polyline points="499.0,338.8 512.1,375.2 523.0,368.3" fill="none" stroke="#6a6aac" stroke-width="1" shape-rendering="crispEdges"/>
<polyline points="236.8,481.9 255.3,509.2 275.0,487.3" fill="none" stroke="#6a6aac" stroke-width="1" shape-rendering="crispEdges"/>
<polyline points="236.8,481.9 275.0,485.0" fill="none" stroke="#6a6aac" stroke-width="1" shape-rendering="crispEdges"/>
<polyline points="275.0,489.5 301.2,478.6 334.0,462.2 351.5,448.0" fill="none" stroke="#6a6aac" stroke-width="1" shape-rendering="crispEdges"/>
<polyline points="351.5,449.0 325.3,472.0 310.0,491.7 307.3,502.2 321.3,515.3" fill="none" stroke="#6a6aac" stroke-width="1" shape-rendering="crispEdges"/>
<polygon points="274.00,61.70 318.33,65.58 361.32,77.10 401.65,95.90 438.10,121.43 469.57,152.90 495.10,189.35 513.90,229.68 525.42,272.67 529.30,317.00 525.42,361.33 513.90,404.32 495.10,444.65 469.57,481.10 438.10,512.57 401.65,538.10 361.32,556.90 318.33,568.42 274.00,572.30 229.67,568.42 186.68,556.90 146.35,538.10 109.90,512.57 78.43,481.10 52.90,444.65 34.10,404.32 22.58,361.33 18.70,317.00 22.58,272.67 34.10,229.68 52.90,189.35 78.43,152.90 109.90,121.43 146.35,95.90 186.68,77.10 229.67,65.58" fill="none" stroke="#ff0000" stroke-width="1" shape-rendering="crispEdges"/>
<circle cx="274" cy="317" r="253.00" fill="none" stroke="#8a8a8a" stroke-width="2" shape-rendering="crispEdges"/>
<circle cx="274" cy="317" r="168.20" fill="none" stroke="#8a8a8a" stroke-width="2" shape-rendering="crispEdges"/>
<circle cx="274" cy="317" r="84.33" fill="none" stroke="#8a8a8a" stroke-width="2" shape-rendering="crispEdges"/>
<path d="M274.0 65.5L274.0 70.5 M317.7 69.3L316.8 74.2 M360.0 80.7L358.3 85.4 M399.8 99.2L397.2 103.5 M435.7 124.3L432.4 128.2 M466.7 155.3L462.8 158.6 M491.8 191.2L487.5 193.7 M510.3 231.0L505.6 232.7 M521.7 273.3L516.8 274.2 M525.5 317.0L520.5 317.0 M521.7 360.7L516.8 359.8 M510.3 403.0L505.6 401.3 M491.8 442.7L487.5 440.2 M466.7 478.7L462.8 475.4 M435.7 509.7L432.4 505.8 M399.8 534.8L397.2 530.5 M360.0 553.3L358.3 548.6 M317.7 564.7L316.8 559.8 M274.0 568.5L274.0 563.5 M230.3 564.7L231.2 559.8 M188.0 553.3L189.7 548.6 M148.2 534.8L150.7 530.5 M112.3 509.7L115.6 505.8 M81.3 478.7L85.2 475.4 M56.2 442.8L60.5 440.3 M37.7 403.0L42.4 401.3 M26.3 360.7L31.2 359.8 M22.5 317.0L27.5 317.0 M26.3 273.3L31.2 274.2 M37.7 231.0L42.4 232.7 M56.2 191.2L60.5 193.7 M81.3 155.3L85.2 158.6 M112.3 124.3L115.6 128.2 M148.2 99.2L150.7 103.5 M188.0 80.7L189.7 85.4 M230.3 69.3L231.2 74.2" stroke="#c0c0c0" stroke-width="1" shape-rendering="crispEdges"/>
<polyline points="25.1,270.1 37.2,301.4 45.6,318.0 58.7,337.7 74.0,357.3 100.0,381.1 105.0,386.1 120.2,396.2 129.2,402.3 142.4,409.3 159.5,417.4 177.8,425.0 210.5,434.9 241.1,440.5 275.0,443.0 301.2,441.4 340.5,436.0 371.1,426.2 405.0,414.1 426.8,402.1 459.6,380.3 481.5,360.6 499.0,337.7 512.1,318.0 526.3,287.4" fill="none" stroke="#70f020" stroke-width="1" shape-rendering="crispEdges"/>
<rect x="20" y="316" width="510" height="2" fill="#ff0000"/>
<rect x="273" y="63" width="2" height="508" fill="#ff0000"/>
</g></svg>
<svg class="a" style="left:0;top:0" width="699" height="595" shape-rendering="crispEdges"><g fill="#d8d8d8"><rect x="142" y="111" width="1" height="1"/><rect x="136" y="123" width="1" height="1"/><rect x="103" y="170" width="1" height="1"/><rect x="198" y="107" width="1" height="1"/><rect x="228" y="106" width="1" height="1"/><rect x="232" y="102" width="1" height="1"/><rect x="255" y="90" width="1" height="1"/><rect x="162" y="98" width="1" height="1"/><rect x="166" y="130" width="1" height="1"/><rect x="192" y="140" width="1" height="1"/><rect x="151" y="154" width="1" height="1"/><rect x="162" y="151" width="1" height="1"/><rect x="184" y="161" width="1" height="1"/><rect x="236" y="146" width="1" height="1"/><rect x="257" y="135" width="1" height="1"/><rect x="258" y="167" width="1" height="1"/><rect x="263" y="170" width="1" height="1"/><rect x="254" y="106" width="1" height="1"/><rect x="299" y="98" width="1" height="1"/><rect x="327" y="95" width="1" height="1"/><rect x="349" y="93" width="1" height="1"/><rect x="300" y="69" width="1" height="1"/><rect x="289" y="79" width="1" height="1"/><rect x="385" y="109" width="1" height="1"/><rect x="347" y="136" width="1" height="1"/><rect x="284" y="146" width="1" height="1"/><rect x="374" y="163" width="1" height="1"/><rect x="383" y="164" width="1" height="1"/><rect x="302" y="174" width="1" height="1"/><rect x="326" y="173" width="1" height="1"/><rect x="337" y="177" width="1" height="1"/><rect x="350" y="182" width="1" height="1"/><rect x="413" y="143" width="1" height="1"/><rect x="424" y="141" width="1" height="1"/><rect x="416" y="165" width="1" height="1"/><rect x="408" y="105" width="1" height="1"/><rect x="90" y="203" width="1" height="1"/><rect x="94" y="211" width="1" height="1"/><rect x="62" y="215" width="1" height="1"/><rect x="48" y="221" width="1" height="1"/><rect x="60" y="222" width="1" height="1"/><rect x="65" y="230" width="1" height="1"/><rect x="65" y="233" width="1" height="1"/><rect x="83" y="243" width="1" height="1"/><rect x="65" y="253" width="1" height="1"/><rect x="73" y="256" width="1" height="1"/><rect x="59" y="258" width="1" height="1"/><rect x="99" y="264" width="1" height="1"/><rect x="124" y="262" width="1" height="1"/><rect x="129" y="265" width="1" height="1"/><rect x="54" y="275" width="1" height="1"/><rect x="90" y="295" width="1" height="1"/><rect x="124" y="294" width="1" height="1"/><rect x="122" y="301" width="1" height="1"/><rect x="128" y="308" width="1" height="1"/><rect x="134" y="291" width="1" height="1"/><rect x="131" y="278" width="1" height="1"/><rect x="173" y="205" width="1" height="1"/><rect x="180" y="209" width="1" height="1"/><rect x="154" y="218" width="1" height="1"/><rect x="177" y="221" width="1" height="1"/><rect x="200" y="216" width="1" height="1"/><rect x="210" y="225" width="1" height="1"/><rect x="239" y="215" width="1" height="1"/><rect x="265" y="217" width="1" height="1"/><rect x="263" y="221" width="1" height="1"/><rect x="222" y="190" width="1" height="1"/><rect x="217" y="206" width="1" height="1"/><rect x="184" y="235" width="1" height="1"/><rect x="167" y="244" width="1" height="1"/><rect x="181" y="244" width="1" height="1"/><rect x="189" y="253" width="1" height="1"/><rect x="155" y="261" width="1" height="1"/><rect x="164" y="263" width="1" height="1"/><rect x="218" y="259" width="1" height="1"/><rect x="246" y="260" width="1" height="1"/><rect x="170" y="278" width="1" height="1"/><rect x="161" y="283" width="1" height="1"/><rect x="189" y="288" width="1" height="1"/><rect x="192" y="284" width="1" height="1"/><rect x="233" y="282" width="1" height="1"/><rect x="241" y="277" width="1" height="1"/><rect x="264" y="279" width="1" height="1"/><rect x="247" y="290" width="1" height="1"/><rect x="177" y="295" width="1" height="1"/><rect x="154" y="290" width="1" height="1"/><rect x="160" y="301" width="1" height="1"/><rect x="217" y="306" width="1" height="1"/><rect x="222" y="309" width="1" height="1"/><rect x="243" y="299" width="1" height="1"/><rect x="295" y="190" width="1" height="1"/><rect x="296" y="202" width="1" height="1"/><rect x="314" y="207" width="1" height="1"/><rect x="276" y="206" width="1" height="1"/><rect x="371" y="202" width="1" height="1"/><rect x="393" y="192" width="1" height="1"/><rect x="335" y="221" width="1" height="1"/><rect x="357" y="230" width="1" height="1"/><rect x="299" y="243" width="1" height="1"/><rect x="370" y="246" width="1" height="1"/><rect x="374" y="247" width="1" height="1"/><rect x="393" y="244" width="1" height="1"/><rect x="287" y="252" width="1" height="1"/><rect x="288" y="256" width="1" height="1"/><rect x="279" y="266" width="1" height="1"/><rect x="288" y="264" width="1" height="1"/><rect x="297" y="264" width="1" height="1"/><rect x="312" y="263" width="1" height="1"/><rect x="319" y="260" width="1" height="1"/><rect x="322" y="265" width="1" height="1"/><rect x="322" y="277" width="1" height="1"/><rect x="325" y="279" width="1" height="1"/><rect x="363" y="297" width="1" height="1"/><rect x="280" y="294" width="1" height="1"/><rect x="276" y="302" width="1" height="1"/><rect x="319" y="289" width="1" height="1"/><rect x="320" y="301" width="1" height="1"/><rect x="311" y="312" width="1" height="1"/><rect x="291" y="314" width="1" height="1"/><rect x="370" y="313" width="1" height="1"/><rect x="379" y="304" width="1" height="1"/><rect x="389" y="295" width="1" height="1"/><rect x="396" y="289" width="1" height="1"/><rect x="397" y="309" width="1" height="1"/><rect x="466" y="212" width="1" height="1"/><rect x="444" y="222" width="1" height="1"/><rect x="408" y="234" width="1" height="1"/><rect x="426" y="234" width="1" height="1"/><rect x="493" y="239" width="1" height="1"/><rect x="413" y="247" width="1" height="1"/><rect x="507" y="266" width="1" height="1"/><rect x="477" y="269" width="1" height="1"/><rect x="409" y="277" width="1" height="1"/><rect x="414" y="277" width="1" height="1"/><rect x="441" y="284" width="1" height="1"/><rect x="494" y="292" width="1" height="1"/><rect x="406" y="293" width="1" height="1"/><rect x="418" y="301" width="1" height="1"/><rect x="437" y="300" width="1" height="1"/><rect x="509" y="306" width="1" height="1"/><rect x="496" y="311" width="1" height="1"/><rect x="31" y="333" width="1" height="1"/><rect x="84" y="327" width="1" height="1"/><rect x="33" y="346" width="1" height="1"/><rect x="46" y="351" width="1" height="1"/><rect x="138" y="346" width="1" height="1"/><rect x="69" y="387" width="1" height="1"/><rect x="43" y="409" width="1" height="1"/><rect x="129" y="431" width="1" height="1"/><rect x="80" y="436" width="1" height="1"/><rect x="106" y="437" width="1" height="1"/><rect x="154" y="339" width="1" height="1"/><rect x="149" y="346" width="1" height="1"/><rect x="173" y="353" width="1" height="1"/><rect x="186" y="356" width="1" height="1"/><rect x="162" y="356" width="1" height="1"/><rect x="207" y="321" width="1" height="1"/><rect x="196" y="330" width="1" height="1"/><rect x="219" y="362" width="1" height="1"/><rect x="223" y="369" width="1" height="1"/><rect x="205" y="381" width="1" height="1"/><rect x="230" y="383" width="1" height="1"/><rect x="263" y="390" width="1" height="1"/><rect x="238" y="398" width="1" height="1"/><rect x="177" y="415" width="1" height="1"/><rect x="184" y="418" width="1" height="1"/><rect x="205" y="413" width="1" height="1"/><rect x="149" y="434" width="1" height="1"/><rect x="291" y="332" width="1" height="1"/><rect x="284" y="330" width="1" height="1"/><rect x="325" y="338" width="1" height="1"/><rect x="331" y="339" width="1" height="1"/><rect x="335" y="335" width="1" height="1"/><rect x="340" y="333" width="1" height="1"/><rect x="310" y="346" width="1" height="1"/><rect x="335" y="348" width="1" height="1"/><rect x="343" y="350" width="1" height="1"/><rect x="364" y="338" width="1" height="1"/><rect x="382" y="327" width="1" height="1"/><rect x="393" y="344" width="1" height="1"/><rect x="315" y="368" width="1" height="1"/><rect x="323" y="375" width="1" height="1"/><rect x="316" y="383" width="1" height="1"/><rect x="361" y="382" width="1" height="1"/><rect x="400" y="362" width="1" height="1"/><rect x="390" y="385" width="1" height="1"/><rect x="378" y="428" width="1" height="1"/><rect x="325" y="429" width="1" height="1"/><rect x="339" y="427" width="1" height="1"/><rect x="388" y="348" width="1" height="1"/><rect x="437" y="327" width="1" height="1"/><rect x="432" y="332" width="1" height="1"/><rect x="454" y="333" width="1" height="1"/><rect x="425" y="340" width="1" height="1"/><rect x="443" y="340" width="1" height="1"/><rect x="465" y="338" width="1" height="1"/><rect x="496" y="322" width="1" height="1"/><rect x="484" y="366" width="1" height="1"/><rect x="509" y="361" width="1" height="1"/><rect x="498" y="375" width="1" height="1"/><rect x="424" y="377" width="1" height="1"/><rect x="437" y="375" width="1" height="1"/><rect x="431" y="383" width="1" height="1"/><rect x="440" y="386" width="1" height="1"/><rect x="459" y="385" width="1" height="1"/><rect x="450" y="397" width="1" height="1"/><rect x="484" y="397" width="1" height="1"/><rect x="486" y="399" width="1" height="1"/><rect x="482" y="405" width="1" height="1"/><rect x="464" y="407" width="1" height="1"/><rect x="434" y="415" width="1" height="1"/><rect x="448" y="418" width="1" height="1"/><rect x="454" y="422" width="1" height="1"/><rect x="441" y="422" width="1" height="1"/><rect x="462" y="422" width="1" height="1"/><rect x="470" y="422" width="1" height="1"/><rect x="477" y="431" width="1" height="1"/><rect x="480" y="437" width="1" height="1"/><rect x="409" y="437" width="1" height="1"/><rect x="426" y="443" width="1" height="1"/><rect x="74" y="452" width="1" height="1"/><rect x="87" y="457" width="1" height="1"/><rect x="71" y="460" width="1" height="1"/><rect x="102" y="465" width="1" height="1"/><rect x="107" y="467" width="1" height="1"/><rect x="124" y="467" width="1" height="1"/><rect x="98" y="473" width="1" height="1"/><rect x="103" y="473" width="1" height="1"/><rect x="90" y="477" width="1" height="1"/><rect x="136" y="452" width="1" height="1"/><rect x="165" y="462" width="1" height="1"/><rect x="146" y="465" width="1" height="1"/><rect x="264" y="462" width="1" height="1"/><rect x="160" y="479" width="1" height="1"/><rect x="163" y="487" width="1" height="1"/><rect x="153" y="493" width="1" height="1"/><rect x="204" y="493" width="1" height="1"/><rect x="223" y="484" width="1" height="1"/><rect x="256" y="488" width="1" height="1"/><rect x="228" y="499" width="1" height="1"/><rect x="202" y="503" width="1" height="1"/><rect x="174" y="506" width="1" height="1"/><rect x="186" y="506" width="1" height="1"/><rect x="189" y="508" width="1" height="1"/><rect x="195" y="509" width="1" height="1"/><rect x="221" y="504" width="1" height="1"/><rect x="229" y="509" width="1" height="1"/><rect x="173" y="513" width="1" height="1"/><rect x="149" y="517" width="1" height="1"/><rect x="208" y="533" width="1" height="1"/><rect x="161" y="537" width="1" height="1"/><rect x="182" y="541" width="1" height="1"/><rect x="242" y="551" width="1" height="1"/><rect x="268" y="541" width="1" height="1"/><rect x="304" y="467" width="1" height="1"/><rect x="291" y="499" width="1" height="1"/><rect x="318" y="519" width="1" height="1"/><rect x="325" y="537" width="1" height="1"/><rect x="351" y="532" width="1" height="1"/><rect x="364" y="542" width="1" height="1"/><rect x="401" y="500" width="1" height="1"/><rect x="388" y="505" width="1" height="1"/><rect x="383" y="527" width="1" height="1"/><rect x="393" y="451" width="1" height="1"/><rect x="397" y="464" width="1" height="1"/><rect x="382" y="467" width="1" height="1"/><rect x="365" y="470" width="1" height="1"/><rect x="358" y="503" width="1" height="1"/><rect x="375" y="511" width="1" height="1"/><rect x="430" y="451" width="1" height="1"/><rect x="451" y="455" width="1" height="1"/><rect x="472" y="463" width="1" height="1"/><rect x="408" y="468" width="1" height="1"/><rect x="419" y="468" width="1" height="1"/><rect x="456" y="470" width="1" height="1"/><rect x="412" y="501" width="1" height="1"/><rect x="424" y="499" width="1" height="1"/><rect x="419" y="503" width="1" height="1"/></g><g fill="#fff"><rect x="246" y="92" width="3" height="3" fill="#909090"/><rect x="245" y="93" width="5" height="1"/><rect x="247" y="91" width="1" height="5"/><rect x="263" y="105" width="3" height="3" fill="#909090"/><rect x="262" y="106" width="5" height="1"/><rect x="264" y="104" width="1" height="5"/><rect x="250" y="164" width="3" height="3" fill="#909090"/><rect x="249" y="165" width="5" height="1"/><rect x="251" y="163" width="1" height="5"/><rect x="279" y="107" width="3" height="3" fill="#909090"/><rect x="278" y="108" width="5" height="1"/><rect x="280" y="106" width="1" height="5"/><rect x="313" y="108" width="3" height="3" fill="#909090"/><rect x="312" y="109" width="5" height="1"/><rect x="314" y="107" width="1" height="5"/><rect x="333" y="126" width="3" height="3" fill="#909090"/><rect x="332" y="127" width="5" height="1"/><rect x="334" y="125" width="1" height="5"/><rect x="322" y="138" width="3" height="3" fill="#909090"/><rect x="321" y="139" width="5" height="1"/><rect x="323" y="137" width="1" height="5"/><rect x="116" y="220" width="3" height="3" fill="#909090"/><rect x="114" y="221" width="7" height="1"/><rect x="117" y="218" width="1" height="7"/><rect x="141" y="275" width="3" height="3" fill="#909090"/><rect x="139" y="276" width="7" height="1"/><rect x="142" y="273" width="1" height="7"/><rect x="136" y="300" width="3" height="3" fill="#909090"/><rect x="135" y="301" width="5" height="1"/><rect x="137" y="299" width="1" height="5"/><rect x="156" y="189" width="3" height="3" fill="#909090"/><rect x="155" y="190" width="5" height="1"/><rect x="157" y="188" width="1" height="5"/><rect x="207" y="252" width="3" height="3" fill="#909090"/><rect x="206" y="253" width="5" height="1"/><rect x="208" y="251" width="1" height="5"/><rect x="158" y="274" width="3" height="3" fill="#909090"/><rect x="157" y="275" width="5" height="1"/><rect x="159" y="273" width="1" height="5"/><rect x="253" y="289" width="3" height="3" fill="#909090"/><rect x="252" y="290" width="5" height="1"/><rect x="254" y="288" width="1" height="5"/><rect x="263" y="297" width="3" height="3" fill="#909090"/><rect x="262" y="298" width="5" height="1"/><rect x="264" y="296" width="1" height="5"/><rect x="270" y="286" width="3" height="3" fill="#909090"/><rect x="269" y="287" width="5" height="1"/><rect x="271" y="285" width="1" height="5"/><rect x="382" y="277" width="3" height="3" fill="#909090"/><rect x="380" y="278" width="7" height="1"/><rect x="383" y="275" width="1" height="7"/><rect x="397" y="261" width="3" height="3" fill="#909090"/><rect x="396" y="262" width="5" height="1"/><rect x="398" y="260" width="1" height="5"/><rect x="333" y="302" width="3" height="3" fill="#909090"/><rect x="332" y="303" width="5" height="1"/><rect x="334" y="301" width="1" height="5"/><rect x="463" y="224" width="3" height="3" fill="#909090"/><rect x="462" y="225" width="5" height="1"/><rect x="464" y="223" width="1" height="5"/><rect x="451" y="227" width="3" height="3" fill="#909090"/><rect x="450" y="228" width="5" height="1"/><rect x="452" y="226" width="1" height="5"/><rect x="478" y="296" width="3" height="3" fill="#909090"/><rect x="477" y="297" width="5" height="1"/><rect x="479" y="295" width="1" height="5"/><rect x="422" y="311" width="3" height="3" fill="#909090"/><rect x="421" y="312" width="5" height="1"/><rect x="423" y="310" width="1" height="5"/><rect x="59" y="327" width="3" height="3" fill="#909090"/><rect x="58" y="328" width="5" height="1"/><rect x="60" y="326" width="1" height="5"/><rect x="127" y="388" width="3" height="3" fill="#909090"/><rect x="126" y="389" width="5" height="1"/><rect x="128" y="387" width="1" height="5"/><rect x="197" y="364" width="3" height="3" fill="#909090"/><rect x="196" y="365" width="5" height="1"/><rect x="198" y="363" width="1" height="5"/><rect x="237" y="373" width="3" height="3" fill="#909090"/><rect x="236" y="374" width="5" height="1"/><rect x="238" y="372" width="1" height="5"/><rect x="187" y="400" width="3" height="3" fill="#909090"/><rect x="186" y="401" width="5" height="1"/><rect x="188" y="399" width="1" height="5"/><rect x="304" y="335" width="3" height="3" fill="#909090"/><rect x="303" y="336" width="5" height="1"/><rect x="305" y="334" width="1" height="5"/><rect x="276" y="357" width="3" height="3" fill="#909090"/><rect x="275" y="358" width="5" height="1"/><rect x="277" y="356" width="1" height="5"/><rect x="314" y="387" width="3" height="3" fill="#909090"/><rect x="313" y="388" width="5" height="1"/><rect x="315" y="386" width="1" height="5"/><rect x="337" y="329" width="3" height="3" fill="#909090"/><rect x="336" y="330" width="5" height="1"/><rect x="338" y="328" width="1" height="5"/><rect x="477" y="348" width="3" height="3" fill="#909090"/><rect x="475" y="349" width="7" height="1"/><rect x="478" y="346" width="1" height="7"/><rect x="473" y="417" width="3" height="3" fill="#909090"/><rect x="471" y="418" width="7" height="1"/><rect x="474" y="415" width="1" height="7"/><rect x="417" y="366" width="3" height="3" fill="#909090"/><rect x="416" y="367" width="5" height="1"/><rect x="418" y="365" width="1" height="5"/><rect x="461" y="369" width="3" height="3" fill="#909090"/><rect x="460" y="370" width="5" height="1"/><rect x="462" y="368" width="1" height="5"/><rect x="475" y="384" width="3" height="3" fill="#909090"/><rect x="474" y="385" width="5" height="1"/><rect x="476" y="383" width="1" height="5"/><rect x="479" y="384" width="3" height="3" fill="#909090"/><rect x="478" y="385" width="5" height="1"/><rect x="480" y="383" width="1" height="5"/><rect x="483" y="382" width="3" height="3" fill="#909090"/><rect x="482" y="383" width="5" height="1"/><rect x="484" y="381" width="1" height="5"/><rect x="498" y="403" width="3" height="3" fill="#909090"/><rect x="497" y="404" width="5" height="1"/><rect x="499" y="402" width="1" height="5"/><rect x="221" y="453" width="3" height="3" fill="#909090"/><rect x="219" y="454" width="7" height="1"/><rect x="222" y="451" width="1" height="7"/><rect x="163" y="528" width="3" height="3" fill="#909090"/><rect x="162" y="529" width="5" height="1"/><rect x="164" y="527" width="1" height="5"/><rect x="254" y="508" width="3" height="3" fill="#909090"/><rect x="253" y="509" width="5" height="1"/><rect x="255" y="507" width="1" height="5"/></g></svg>
<div class="t" style="left:23px;top:301px;font-size:15px;color:#d0d0d0;font-weight:normal;">W</div><div class="t" style="left:514px;top:319px;font-size:15px;color:#d0d0d0;font-weight:normal;">E</div><div class="t" style="left:287px;top:64px;font-size:15px;color:#d0d0d0;font-weight:normal;">N</div><div class="t" style="left:267px;top:553.5px;font-size:14.5px;color:#d0d0d0;font-weight:normal;">S</div><div class="t" style="left:24px;top:319px;font-size:10.5px;color:#00ffff;font-weight:normal;">0°</div><div class="t" style="left:98px;top:319px;font-size:10.5px;color:#00ffff;font-weight:normal;">30°</div><div class="t" style="left:182px;top:319px;font-size:10.5px;color:#00ffff;font-weight:normal;">60°</div>
<div class="t" style="left:226px;top:309px;font-size:20px;color:#ffff00;font-weight:bold;">QTH</div><div class="t" style="left:275px;top:319px;font-size:9.5px;color:#ffff00;font-weight:bold;">Prague, Czech Rep.</div><div class="a" style="left:496px;top:226px;width:31px;height:11px;background:#0000ff"></div><div class="t" style="left:497.5px;top:226px;font-size:9.5px;color:#ffff00;font-weight:bold;">Venus</div><div class="a" style="left:340px;top:412px;width:36px;height:11px;background:#0000ff"></div><div class="t" style="left:341.5px;top:412px;font-size:9.5px;color:#ffff00;font-weight:bold;">Uranus</div><div class="a" style="left:189px;top:466px;width:41px;height:11px;background:#0000ff"></div><div class="t" style="left:190.5px;top:466px;font-size:9.5px;color:#ffff00;font-weight:bold;">Neptune</div><div class="a" style="left:305px;top:444px;width:28px;height:11px;background:#808080"></div><div class="a" style="left:305px;top:443px;width:23px;height:11px;background:#0000ff"></div><div class="t" style="left:307px;top:443px;font-size:9.5px;color:#ffff00;font-weight:bold;">Mars</div><div class="a" style="left:293px;top:481px;width:70px;height:10px;background:#808080"></div><div class="t" style="left:294.5px;top:481.5px;font-size:8.6px;color:#ffff00;font-weight:bold;letter-spacing:-0.2px">ASTRA ESHAIL 2</div>
<svg class="a" style="left:0;top:0" width="699" height="595"><g transform="translate(494.5,223.5)"><path d="M0 -3 L3 0 L0 3 L-3 0 Z" fill="none" stroke="#ffff00" stroke-width="1.2"/><path d="M-5 0H5M0 -5V5" stroke="#fff" stroke-width="1"/></g><g transform="translate(338.5,409.5)"><path d="M0 -3 L3 0 L0 3 L-3 0 Z" fill="none" stroke="#ffff00" stroke-width="1.2"/><path d="M-5 0H5M0 -5V5" stroke="#fff" stroke-width="1"/></g><g transform="translate(187,462.5)"><path d="M0 -3 L3 0 L0 3 L-3 0 Z" fill="none" stroke="#ffff00" stroke-width="1.2"/><path d="M-5 0H5M0 -5V5" stroke="#fff" stroke-width="1"/></g><g transform="translate(302,440)"><path d="M0 -3 L3 0 L0 3 L-3 0 Z" fill="none" stroke="#ffff00" stroke-width="1.2"/><path d="M-5 0H5M0 -5V5" stroke="#fff" stroke-width="1"/></g><g transform="translate(291,477.5)"><path d="M0 -3 L3 0 L0 3 L-3 0 Z" fill="none" stroke="#ffff00" stroke-width="1.2"/><path d="M-5 0H5M0 -5V5" stroke="#fff" stroke-width="1"/></g><g transform="translate(316,477)"><path d="M0 -3 L3 0 L0 3 L-3 0 Z" fill="none" stroke="#ffff00" stroke-width="1.2"/><path d="M-5 0H5M0 -5V5" stroke="#fff" stroke-width="1"/></g><path d="M273.5 318 L311 455" stroke="#ffff00" stroke-width="3.2"/><path d="M302.7 453 L316.5 452 L316.5 479 Z" fill="#ffff00"/><path d="M163.3 400.3 L276 431.3" stroke="#fff" stroke-width="2.4" stroke-linecap="round"/><path d="M274.5 425.5 L291.5 436.5 L271.5 437.5 Z" fill="#fff"/><path d="M430.5 532.3 L334 489" stroke="#fff" stroke-width="2.4" stroke-linecap="round"/><path d="M321 483 L339 486 L336.5 495.5 Z" fill="#fff"/></svg>
<div class="t" style="left:58px;top:391.5px;font-size:16.5px;color:#fff;font-weight:normal;will-change:transform">Tady je Měsíc</div><div class="t" style="left:58px;top:410px;font-size:16.5px;color:#fff;font-weight:normal;will-change:transform">překrývá Mars</div><div class="t" style="left:409px;top:535px;font-size:16.3px;color:#fff;font-weight:normal;will-change:transform">Tady je QO-100</div><div class="a" style="left:16px;top:540px;width:85px;height:18px;background:#fff;border-top:1px solid #a0a0a0;border-left:1px solid #a0a0a0;border-right:1px solid #fff;border-bottom:1px solid #fff;box-shadow:inset 1px 1px 0 #696969,inset -1px -1px 0 #e3e3e3"></div><div class="t" style="left:30px;top:543px;font-size:11px;color:#000;font-weight:normal;">184.2°/-1.7°</div><div class="a" style="left:16px;top:559px;width:120px;height:18px;background:#fff;border-top:1px solid #a0a0a0;border-left:1px solid #a0a0a0;border-right:1px solid #fff;border-bottom:1px solid #fff;box-shadow:inset 1px 1px 0 #696969,inset -1px -1px 0 #e3e3e3"></div>
</body></html>
